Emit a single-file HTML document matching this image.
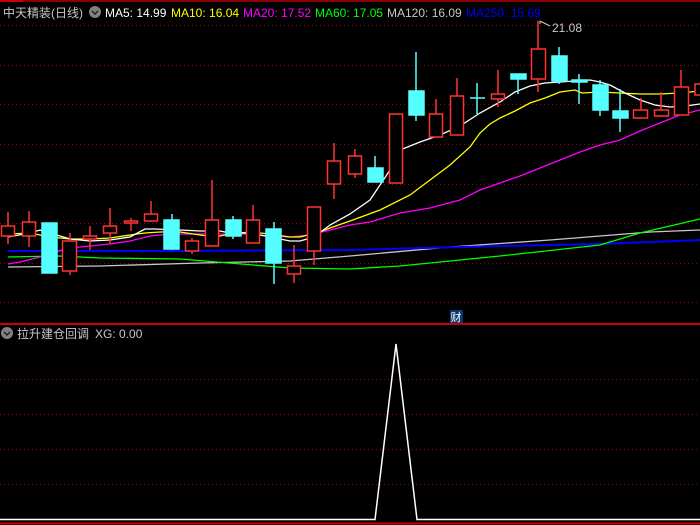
<!DOCTYPE html>
<html><head><meta charset="utf-8"><style>
html,body{margin:0;padding:0;background:#000;width:700px;height:525px;overflow:hidden}
svg{display:block}
text{font-family:"Liberation Sans","Noto Sans CJK SC",sans-serif;font-size:12px}
</style></head><body>
<svg width="700" height="525" viewBox="0 0 700 525" xmlns="http://www.w3.org/2000/svg">
<rect width="700" height="525" fill="#000"/>
<line x1="0" y1="1" x2="700" y2="1" stroke="#800" stroke-width="2"/>
<line x1="0" y1="1" x2="23" y2="1" stroke="#c00" stroke-width="2"/>
<g stroke="#900" stroke-width="1" stroke-dasharray="1,3">
<line x1="0" y1="25.5" x2="700" y2="25.5"/>
<line x1="0" y1="65.5" x2="700" y2="65.5"/>
<line x1="0" y1="104.5" x2="700" y2="104.5"/>
<line x1="0" y1="144.5" x2="700" y2="144.5"/>
<line x1="0" y1="184.5" x2="700" y2="184.5"/>
<line x1="0" y1="223.5" x2="700" y2="223.5"/>
<line x1="0" y1="263.5" x2="700" y2="263.5"/>
<line x1="0" y1="302.5" x2="700" y2="302.5"/>
<line x1="0" y1="379.5" x2="700" y2="379.5"/>
<line x1="0" y1="414.5" x2="700" y2="414.5"/>
<line x1="0" y1="449.5" x2="700" y2="449.5"/>
<line x1="0" y1="484.5" x2="700" y2="484.5"/>
</g>
<line x1="0" y1="324" x2="700" y2="324" stroke="#c00" stroke-width="2"/>
<line x1="0" y1="523.5" x2="700" y2="523.5" stroke="#c00" stroke-width="2"/>

<!-- MA lines -->
<g fill="none" stroke-width="1.3">
<polyline stroke="#c8c8c8" points="8,267 100,266 200,263 290,261 350,256 450,247 550,240 650,232 700,230"/>
<polyline stroke="#0000ff" stroke-width="2" points="8,251 160,251 350,250 500,246 600,244 700,240"/>
<polyline stroke="#00ff00" points="8,257 60,256 100,258 180,259 290,268 350,269 400,266 500,256 600,245 640,233 700,219"/>
<polyline stroke="#ff00ff" points="8,264 20,262 40,257 55,252 70,248 90,246 110,244 130,241 150,236 170,234 250,234 270,236 290,237 310,235 330,230 350,225 370,222 400,213 430,208 460,200 480,190 500,183 520,176 540,168 560,160 580,152 600,145 620,140 640,131 660,123 680,115 700,110"/>
<polyline stroke="#ffff00" points="8,234 30,233 50,237 70,239 90,239 110,238 130,235 145,233 160,232 180,232 200,235 215,237 230,234 250,232 270,234 290,237 300,237 316,233 330,228 350,221 380,210 410,195 430,180 450,165 470,147 480,133 490,124 500,118 515,111 530,103 545,98 560,92 575,90 582,93 600,92 620,93 640,94 660,94 680,93 700,91"/>
<polyline stroke="#ffffff" points="8,237 30,233 40,230 50,233 60,236 70,239 90,241 110,240 130,237 145,229 155,229 180,230 200,231 220,231 230,233 250,233 270,237 290,241 300,241 314,237 330,225 350,214 370,200 390,170 400,150 420,142 440,135 460,126 480,113 500,102 515,92 530,86 545,83 560,82 575,81 590,80 600,82 610,85 625,93 640,100 655,105 670,107 685,106 700,104"/>
</g>

<!-- candles -->
<g stroke="#ff3333" stroke-width="1.5" fill="#000">
<line x1="8" y1="212" x2="8" y2="244"/><rect x="1.5" y="226" width="13" height="10"/>
<line x1="29" y1="211" x2="29" y2="247"/><rect x="22.5" y="222" width="13" height="14"/>
<line x1="70" y1="233" x2="70" y2="275"/><rect x="62.5" y="241" width="14" height="30"/>
<line x1="90" y1="226" x2="90" y2="250"/><rect x="83.5" y="236" width="13" height="3"/>
<line x1="110" y1="208" x2="110" y2="244"/><rect x="103.5" y="226" width="13" height="7"/>
<line x1="131" y1="218" x2="131" y2="231"/><rect x="124.5" y="221" width="13" height="2"/>
<line x1="151" y1="201" x2="151" y2="222"/><rect x="144.5" y="214" width="13" height="7"/>
<line x1="192" y1="238" x2="192" y2="254"/><rect x="185.5" y="241" width="13" height="10"/>
<line x1="212" y1="180" x2="212" y2="246"/><rect x="205.5" y="220" width="13" height="26"/>
<line x1="253" y1="205" x2="253" y2="243"/><rect x="246.5" y="220" width="13" height="23"/>
<line x1="294" y1="245" x2="294" y2="283"/><rect x="287.5" y="266" width="13" height="8"/>
<line x1="314" y1="251" x2="314" y2="265"/><rect x="307.5" y="207" width="13" height="44"/>
<line x1="334" y1="143" x2="334" y2="199"/><rect x="327.5" y="161" width="13" height="23"/>
<line x1="355" y1="149" x2="355" y2="178"/><rect x="348.5" y="156" width="13" height="18"/>
<rect x="389.5" y="114" width="13" height="69"/>
<line x1="436" y1="99" x2="436" y2="137"/><rect x="429.5" y="114" width="13" height="23"/>
<line x1="457" y1="78" x2="457" y2="135"/><rect x="450.5" y="96" width="13" height="39"/>
<line x1="498" y1="70" x2="498" y2="107"/><rect x="491.5" y="94" width="13" height="5"/>
<line x1="538" y1="21" x2="538" y2="92"/><rect x="531.5" y="49" width="14" height="30"/>
<line x1="641" y1="98" x2="641" y2="118"/><rect x="633.5" y="110" width="14" height="8"/>
<line x1="661" y1="92" x2="661" y2="117"/><rect x="654.5" y="110" width="14" height="6"/>
<line x1="681" y1="70" x2="681" y2="115"/><rect x="674.5" y="87" width="14" height="28"/>
<rect x="695" y="84" width="8" height="11"/>
</g>
<g stroke="#55ffff" stroke-width="1.5" fill="#55ffff">
<rect x="42" y="223" width="15" height="50"/>
<line x1="172" y1="214" x2="172" y2="250"/><rect x="164" y="220" width="15" height="29"/>
<line x1="233" y1="216" x2="233" y2="239"/><rect x="226" y="220" width="15" height="16"/>
<line x1="274" y1="222" x2="274" y2="284"/><rect x="266" y="229" width="15" height="34"/>
<line x1="375" y1="156" x2="375" y2="182"/><rect x="368" y="168" width="15" height="14"/>
<line x1="416" y1="52" x2="416" y2="121"/><rect x="409" y="91" width="15" height="24"/>
<line x1="477" y1="83" x2="477" y2="114"/><line x1="470" y1="98" x2="485" y2="98"/>
<line x1="518" y1="74" x2="518" y2="94"/><rect x="511" y="74" width="15" height="5"/>
<line x1="559" y1="47" x2="559" y2="84"/><rect x="552" y="56" width="15" height="25"/>
<line x1="579" y1="74" x2="579" y2="104"/><rect x="572" y="80" width="15" height="2"/>
<line x1="600" y1="80" x2="600" y2="116"/><rect x="593" y="85" width="15" height="25"/>
<line x1="620" y1="89" x2="620" y2="132"/><rect x="613" y="111" width="15" height="7"/>
</g>

<!-- high label -->
<polyline points="540,24 540,21 544,23 550,26" fill="none" stroke="#ccc" stroke-width="1"/>
<text x="552" y="32" fill="#c8c8c8">21.08</text>

<!-- 财 badge -->
<rect x="450" y="310" width="13" height="13" fill="#0a3a6a"/>
<text x="450.5" y="321" fill="#fff" style="font-size:11px">财</text>

<!-- header -->
<text x="3" y="17" fill="#c8c8c8">中天精装(日线)</text>
<circle cx="95" cy="12" r="6" fill="#808080"/>
<polyline points="92,11 95,14 98,11" fill="none" stroke="#222" stroke-width="1.5"/>
<text x="105" y="17" fill="#ffffff">MA5: 14.99</text>
<text x="171" y="17" fill="#ffff00">MA10: 16.04</text>
<text x="243" y="17" fill="#ff00ff">MA20: 17.52</text>
<text x="315" y="17" fill="#00ff00">MA60: 17.05</text>
<text x="387" y="17" fill="#c8c8c8">MA120: 16.09</text>
<text x="466" y="17" fill="#0000ff">MA250: 15.69</text>

<!-- lower pane -->
<circle cx="7" cy="333" r="6" fill="#808080"/>
<polyline points="4,332 7,335 10,332" fill="none" stroke="#222" stroke-width="1.5"/>
<text x="17" y="338" fill="#c8c8c8">拉升建仓回调</text>
<text x="95" y="338" fill="#c8c8c8">XG: 0.00</text>
<polyline points="0,519.5 375,519.5 396,344 417,519.5 700,519.5" fill="none" stroke="#fff" stroke-width="1.5"/>
</svg>
</body></html>
